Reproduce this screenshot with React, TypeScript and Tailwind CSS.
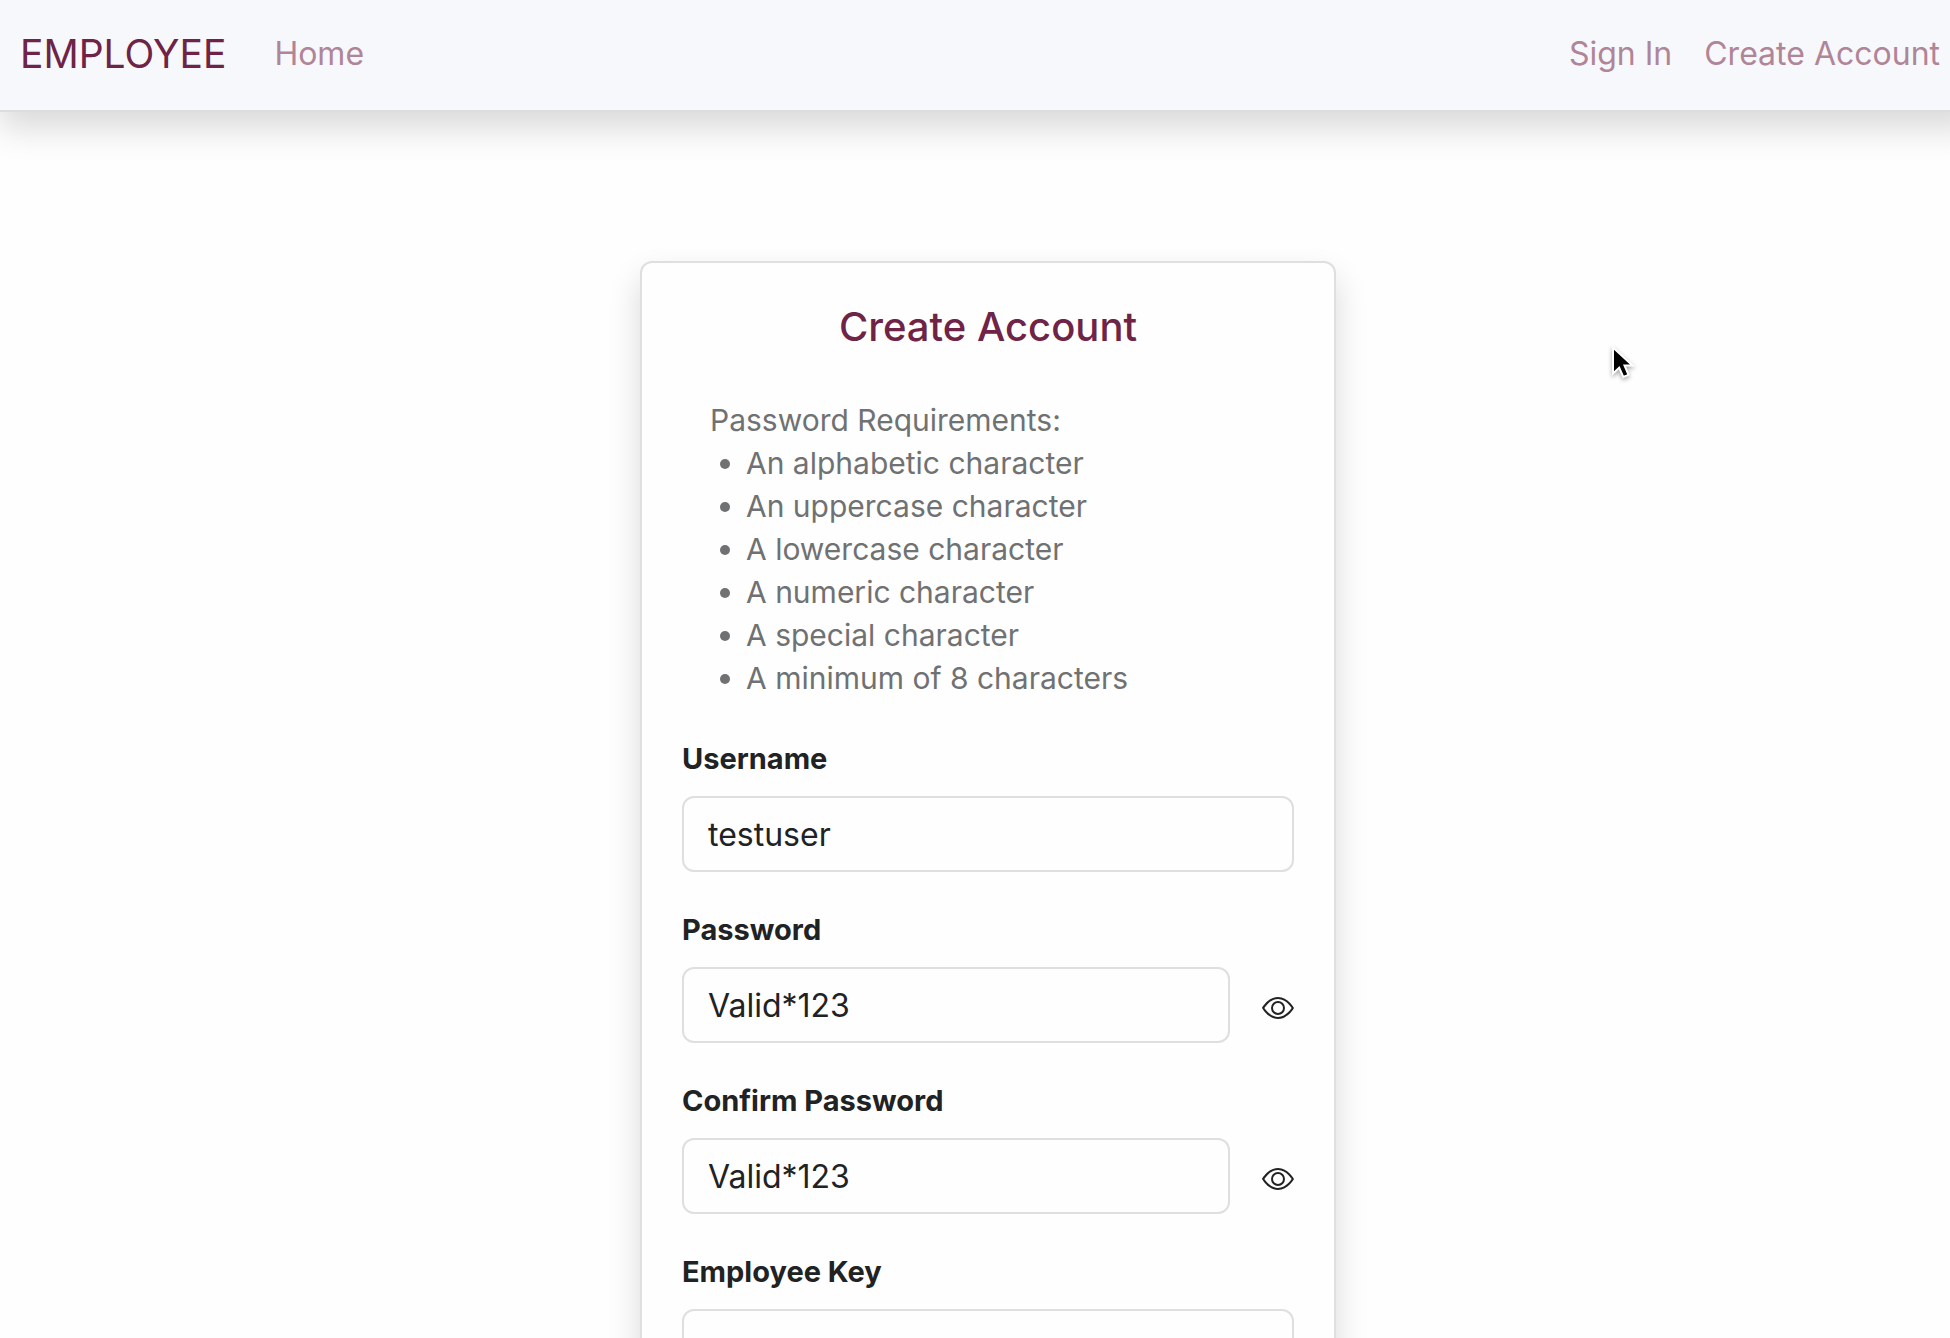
import { useState } from "react";
import { BsEye } from "react-icons/bs";

const requirements = [
  "An alphabetic character",
  "An uppercase character",
  "A lowercase character",
  "A numeric character",
  "A special character",
  "A minimum of 8 characters",
];

type FieldProps = {
  id: string;
  label: string;
  initial: string;
  toggle?: boolean;
};

function Field({ id, label, initial, toggle = false }: FieldProps) {
  const [value, setValue] = useState(initial);
  const [hidden, setHidden] = useState(false);

  return (
    <div className="flex flex-col gap-4">
      <label htmlFor={id} className="text-[29px] leading-[43px] font-bold">
        {label}
      </label>
      <div className="flex items-center gap-8">
        <input
          id={id}
          type={hidden ? "password" : "text"}
          value={value}
          onChange={(e) => setValue(e.target.value)}
          className="h-[76px] min-w-0 flex-1 rounded-xl border-2 border-[#dedfe0] bg-[#fefefe] px-6 text-[32px] leading-[48px] outline-none focus:border-[#6f2346]"
        />
        {toggle && (
          <button
            type="button"
            aria-label={`Show or hide ${label}`}
            onClick={() => setHidden(!hidden)}
            className="pt-[6px]"
          >
            <BsEye className="size-8" />
          </button>
        )}
      </div>
    </div>
  );
}

function Pointer() {
  return (
    <svg
      viewBox="0 0 24 34"
      className="pointer-events-none absolute top-[345px] left-[1611px] h-[34px] w-6 drop-shadow-[0_2px_2px_rgba(0,0,0,0.35)]"
      aria-hidden="true"
    >
      <path
        d="M2 2.500V28.500L8.200 22.800L12.300 32L17.500 29.800L13.500 20.500H21.500Z"
        fill="#000"
        stroke="#fff"
        strokeWidth="2"
      />
    </svg>
  );
}

export default function App() {
  return (
    <div className="relative h-screen overflow-hidden bg-[#fefefe] font-['Inter',sans-serif] text-[#212223]">
      <div className="w-[calc(100%+26px)]">
        <nav className="relative flex h-28 items-center border-b-2 border-[#dddddd] bg-[#f7f8fb] pr-9 pb-[2px] pl-5 text-[32px] text-[#b08598] shadow-[0_16px_32px_rgba(0,0,0,0.15)]">
          <a href="#" className="text-[39px] leading-[60px] text-[#6f2346]">
            EMPLOYEE
          </a>
          <a href="#" className="ml-12 leading-[48px]">
            Home
          </a>
          <div className="ml-auto flex gap-8 leading-[48px]">
            <a href="#">Sign In</a>
            <a href="#">Create Account</a>
          </div>
        </nav>

        <main className="flex justify-center pt-[149px]">
          <form className="w-full max-w-[696px] rounded-xl border-2 border-[#dedfe0] bg-[#fefefe] px-10 pt-10 pb-10 shadow-[0_16px_32px_rgba(0,0,0,0.15)]">
            <h1 className="text-center text-[40px] leading-[48px] font-medium text-[#6f2346]">
              Create Account
            </h1>

            <div className="mt-12 pl-7 text-[30px] leading-[43px] text-[#707172]">
              <p>Password Requirements:</p>
              <ul>
                {requirements.map((item) => (
                  <li key={item} className="flex items-center gap-4 pl-[10px]">
                    <span className="size-[10px] rounded-full bg-[#707172]" />
                    {item}
                  </li>
                ))}
              </ul>
            </div>

            <div className="mt-[37px] flex flex-col gap-9">
              <Field id="username" label="Username" initial="testuser" />
              <Field id="password" label="Password" initial="Valid*123" toggle />
              <Field id="confirm" label="Confirm Password" initial="Valid*123" toggle />
              <Field id="key" label="Employee Key" initial="" />
            </div>
          </form>
        </main>
      </div>

      <Pointer />
    </div>
  );
}
